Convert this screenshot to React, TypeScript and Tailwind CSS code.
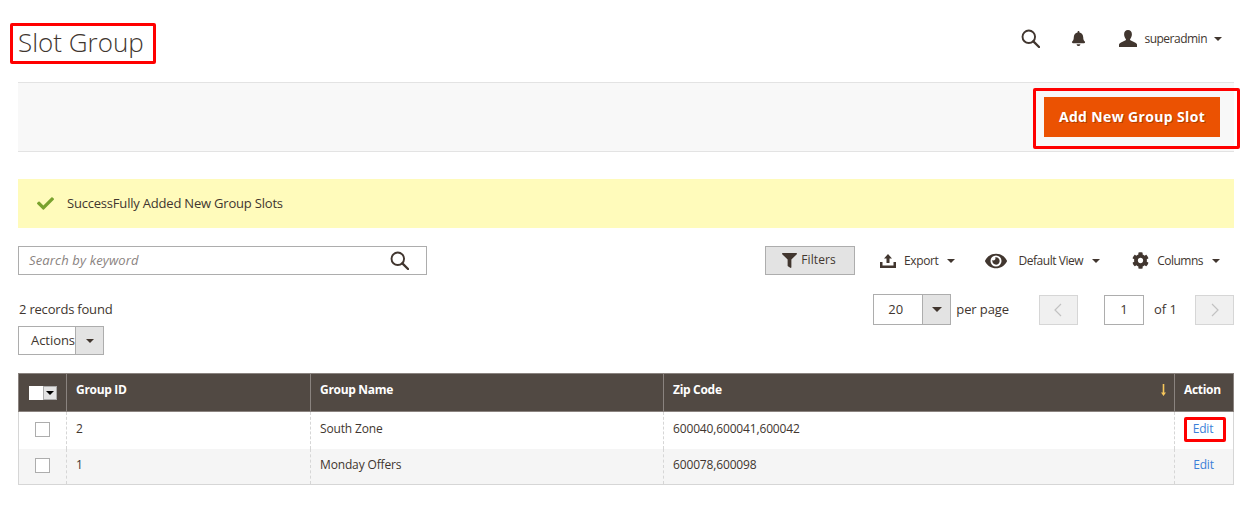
import { FaBell, FaCheck, FaCog, FaEye, FaFilter } from 'react-icons/fa';

const TEXT = 'text-[#41362f]';

function Caret({ className = '' }: { className?: string }) {
  return <span className={`inline-block h-0 w-0 border-x-[4px] border-t-[4px] border-x-transparent border-t-[#41362f] ${className}`} />;
}

function SearchIcon({ size }: { size: number }) {
  return (
    <svg width={size} height={size} viewBox="0 0 20 20" fill="none" stroke="#41362f">
      <circle cx="8.2" cy="8.2" r="6.6" strokeWidth="2" />
      <path d="M13 13l6 6" strokeWidth="2.4" strokeLinecap="round" />
    </svg>
  );
}

function UserIcon() {
  return (
    <svg width="18" height="17" viewBox="0 0 18 17" fill="#41362f">
      <path d="M9 0c2.500 0 3.900 1.700 3.900 4.300 0 1.900-.7 3.500-1.700 4.700-.3.4-.2 1 .2 1.200l4.600 2.300c1 .5 2 1.300 2 2.300V17H0v-2.200c0-1 1-1.800 2-2.300l4.600-2.300c.4-.2.500-.8.200-1.200C5.800 7.800 5.100 6.200 5.100 4.300 5.100 1.700 6.500 0 9 0z" />
    </svg>
  );
}

function ExportIcon() {
  return (
    <svg width="16" height="14" viewBox="0 0 16 14" fill="#41362f">
      <path d="M8 0l4 4.500H9.500V9h-3V4.500H4z" />
      <path d="M0 8h2.500v3.500h11V8H16v6H0z" />
    </svg>
  );
}

function ToolbarAction({ icon, label, labelClass = '' }: { icon: React.ReactNode; label: string; labelClass?: string }) {
  return (
    <div className={`flex items-center ${TEXT}`}>
      {icon}
      <span className={`text-[12px] ${labelClass}`}>{label}</span>
      <Caret className="ml-[9px]" />
    </div>
  );
}

const ROWS = [
  { id: '2', name: 'South Zone', zip: '600040,600041,600042', marked: true },
  { id: '1', name: 'Monday Offers', zip: '600078,600098', marked: false },
];

export default function App() {
  return (
    <div className={`h-[532px] w-[1259px] overflow-hidden bg-white pl-[18px] pr-[25px] font-['Open_Sans',sans-serif] ${TEXT}`}>
      <header className="flex h-[82px] items-start justify-between">
        <h1 className="-ml-[8px] mt-[23px] flex h-[41px] w-[146px] items-center whitespace-nowrap rounded-[2px] border-[3px] border-[#ff0000] pb-[3px] pl-[5px] text-[26px] font-light leading-none">
          Slot Group
        </h1>
        <div className="mr-[12px] mt-[29px] flex items-center">
          <SearchIcon size={19} />
          <FaBell className="ml-[31px] text-[15px]" />
          <div className="ml-[33px]"><UserIcon /></div>
          <span className="ml-[7px] text-[12px] tracking-[-0.5px]">superadmin</span>
          <Caret className="ml-[7px]" />
        </div>
      </header>

      <div className="flex h-[70px] items-start justify-end border-y border-[#e3e3e3] bg-[#f8f8f8]">
        <div className="-mr-[6px] mt-[5px] rounded-[2px] border-[3px] border-[#ff0000] pb-[9px] pl-[8px] pt-[6px]">
          <button className="mr-[17px] block h-[40px] w-[176px] bg-[#eb5202] pb-[2px] text-[14px] font-bold tracking-[0.35px] text-white [text-shadow:1px_1px_0_#b13c00]">
            Add New Group Slot
          </button>
        </div>
      </div>

      <div className="mt-[27px] flex h-[49px] items-center bg-[#fffbbb] pl-[19px] text-[13px]">
        <FaCheck className="text-[17px] text-[#79a22e]" />
        <span className="ml-[13px] tracking-[-0.2px]">SuccessFully Added New Group Slots</span>
      </div>

      <div className="mt-[18px] flex h-[29px] items-center justify-between">
        <div className="flex h-[29px] w-[409px] items-center justify-between border border-[#adadad] pl-[10px] pr-[17px]">
          <span className="text-[13px] italic tracking-[0.15px] text-[#8a837f]">Search by keyword</span>
          <SearchIcon size={19} />
        </div>
        <div className="mr-[14px] flex items-center">
          <button className="flex h-[29px] w-[90px] items-center justify-center border border-[#adadad] bg-[#e3e3e3] pr-[2px] text-[12px]">
            <FaFilter className="mr-[4px] text-[15px]" />
            <span className="-mt-[2px] tracking-[0.1px]">Filters</span>
          </button>
          <ToolbarAction icon={<span className="ml-[25px] mr-[8px]"><ExportIcon /></span>} label="Export" labelClass="tracking-[-0.4px]" />
          <ToolbarAction icon={<FaEye className="ml-[30px] mr-[11px] text-[22px]" />} label="Default View" labelClass="tracking-[-0.45px]" />
          <ToolbarAction icon={<FaCog className="ml-[32px] mr-[8px] text-[17px]" />} label="Columns" labelClass="tracking-[-0.5px]" />
        </div>
      </div>

      <div className="mt-[19px] flex items-start justify-between">
        <div>
          <div className="mt-px pl-px text-[13px] leading-[29px] tracking-[-0.2px]">2 records found</div>
          <div className="mt-[2px] flex h-[29px] w-[86px] border border-[#adadad]">
            <span className="flex w-[56px] items-center justify-end text-[13px] tracking-[-0.05px]">Actions</span>
            <span className="flex flex-1 items-center justify-center border-l border-[#adadad] bg-[#e3e3e3]"><Caret /></span>
          </div>
        </div>
        <div className="flex items-center text-[13px]">
          <div className="flex h-[31px] w-[78px] border border-[#adadad]">
            <span className="flex w-[48px] items-center justify-center pr-[5px]">20</span>
            <span className="flex flex-1 items-center justify-center border-l border-[#adadad] bg-[#e3e3e3]"><Caret className="border-x-[5px] border-t-[5px]" /></span>
          </div>
          <span className="ml-[5px] tracking-[-0.1px]">per page</span>
          <button className="ml-[30px] flex h-[30px] w-[39px] items-center justify-center border border-[#d6d6d6] bg-[#f0f0f0]">
            <svg width="8" height="14" viewBox="0 0 8 14" fill="none" stroke="#c2c2c2" strokeWidth="1.200"><path d="M7 1L1 7l6 6" /></svg>
          </button>
          <div className="ml-[26px] flex h-[30px] w-[40px] items-center justify-center border border-[#adadad]">1</div>
          <span className="ml-[10px]">of 1</span>
          <button className="ml-[18px] flex h-[30px] w-[39px] items-center justify-center border border-[#d6d6d6] bg-[#f0f0f0]">
            <svg width="8" height="14" viewBox="0 0 8 14" fill="none" stroke="#c2c2c2" strokeWidth="1.200"><path d="M1 1l6 6-6 6" /></svg>
          </button>
        </div>
      </div>

      <table className="mt-[18px] w-[1215px] table-fixed border-collapse text-[12px] tracking-[-0.15px]">
        <colgroup>
          <col className="w-[48px]" />
          <col className="w-[244px]" />
          <col className="w-[353px]" />
          <col className="w-[511px]" />
          <col className="w-[59px]" />
        </colgroup>
        <thead>
          <tr className="h-[38px] bg-[#514943] text-left tracking-[-0.3px] text-white">
            <th className="border border-[#8a837f] pl-[10px] font-normal">
              <span className="flex h-[14px] w-[28px]">
                <span className="w-[14px] bg-white" />
                <span className="flex flex-1 items-center justify-center border border-[#adadad] bg-[#e3e3e3]"><Caret className="border-t-black" /></span>
              </span>
            </th>
            <th className="border border-[#8a837f] pb-[5px] pl-[9px] font-bold">Group ID</th>
            <th className="border border-[#8a837f] pb-[5px] pl-[9px] font-bold">Group Name</th>
            <th className="border border-[#8a837f] pb-[5px] pl-[9px] font-bold">
              <div className="flex items-center justify-between pr-[8px]">
                Zip Code
                <svg width="5" height="12" viewBox="0 0 5 12" fill="#f6c65b" className="-mt-[1px]">
                  <path d="M1.700 0h1.600v8.500H5L2.500 12 0 8.500h1.700z" />
                </svg>
              </div>
            </th>
            <th className="border border-[#8a837f] pb-[5px] pl-[9px] font-bold">Action</th>
          </tr>
        </thead>
        <tbody>
          {ROWS.map((row, i) => (
            <tr key={row.id} className={i === 0 ? 'h-[37px] bg-white' : 'h-[36px] border-b border-[#d6d6d6] bg-[#f5f5f5]'}>
              <td className="border-l border-r border-[#d6d6d6] pb-[2px] pl-[16px] [border-right-style:dashed]">
                <span className="block h-[15px] w-[15px] border border-[#adadad] bg-white" />
              </td>
              <td className="border-r border-[#d6d6d6] pb-[2px] pl-[9px] [border-right-style:dashed]">{row.id}</td>
              <td className="border-r border-[#d6d6d6] pb-[2px] pl-[9px] [border-right-style:dashed]">{row.name}</td>
              <td className="border-r border-[#d6d6d6] pb-[2px] pl-[9px] [border-right-style:dashed]">{row.zip}</td>
              <td className="border-r border-[#d6d6d6] pb-[2px] text-center">
                {row.marked ? (
                  <span className="ml-[9px] flex h-[25px] w-[42px] items-center justify-center rounded-[2px] border-[3px] border-[#ff0000] pr-[4px] text-[#3b7fd8]">Edit</span>
                ) : (
                  <span className="pr-[1px] text-[#3b7fd8]">Edit</span>
                )}
              </td>
            </tr>
          ))}
        </tbody>
      </table>
    </div>
  );
}
